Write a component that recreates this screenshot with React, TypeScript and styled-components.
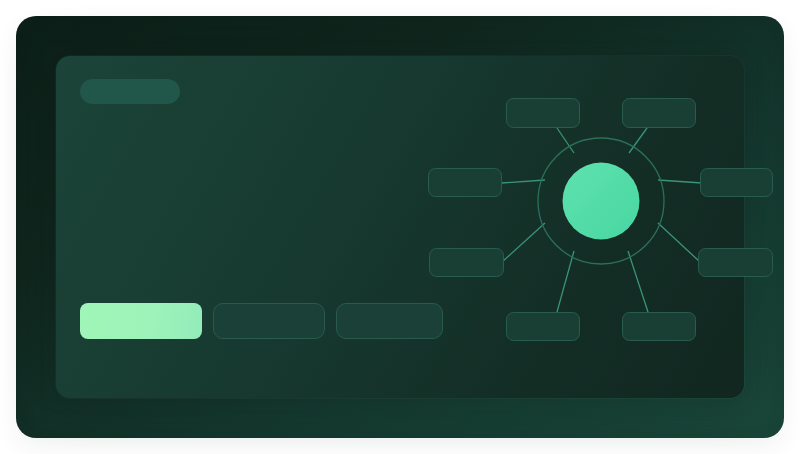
import { createGlobalStyle, styled } from 'styled-components';

const GlobalStyle = createGlobalStyle`
  html, body {
    margin: 0;
    padding: 0;
    background: #ffffff;
    font-family: Inter, "Liberation Sans", sans-serif;
  }
`;

interface DiagramNode {
  x: number;
  y: number;
  w: number;
  h: number;
}

const nodes: DiagramNode[] = [
  { x: 78, y: 0, w: 74, h: 30 },
  { x: 194, y: 0, w: 74, h: 30 },
  { x: 0, y: 70, w: 74, h: 29 },
  { x: 272, y: 70, w: 73, h: 29 },
  { x: 1, y: 150, w: 75, h: 29 },
  { x: 270, y: 150, w: 75, h: 29 },
  { x: 78, y: 214, w: 74, h: 29 },
  { x: 194, y: 214, w: 74, h: 29 },
];

const links: [number, number, number, number][] = [
  [129, 30, 146, 55],
  [219, 30, 201, 55],
  [74, 85, 117, 82],
  [230, 82, 274, 85],
  [74, 164, 117, 125],
  [230, 125, 272, 164],
  [146, 153, 129, 214],
  [200, 153, 220, 214],
];

function HubDiagram() {
  return (
    <DiagramSvg viewBox="0 0 346 244" width={346} height={244}>
      <defs>
        <linearGradient id="hub" x1="0" y1="0" x2="1" y2="1">
          <stop offset="0%" stopColor="#5fe2ae" />
          <stop offset="100%" stopColor="#48d6a2" />
        </linearGradient>
      </defs>
      {links.map(([x1, y1, x2, y2], i) => (
        <line key={i} x1={x1} y1={y1} x2={x2} y2={y2} stroke="#3a9477" strokeWidth={1.3} />
      ))}
      <circle cx={173} cy={103} r={63} fill="none" stroke="#2c6f5a" strokeWidth={1.3} />
      <circle cx={173} cy={103} r={38.5} fill="url(#hub)" />
      {nodes.map((n, i) => (
        <rect
          key={i}
          x={n.x + 0.5}
          y={n.y + 0.5}
          width={n.w - 1}
          height={n.h - 1}
          rx={7}
          fill="#193f35"
          stroke="#2a5c4d"
          strokeWidth={1}
        />
      ))}
    </DiagramSvg>
  );
}

function App() {
  return (
    <>
      <GlobalStyle />
      <Page>
        <OuterCard>
          <Panel>
            <TagPill />
            <ButtonRow>
              <PrimaryButton />
              <GhostButton $width={112} />
              <GhostButton $width={107} />
            </ButtonRow>
            <HubDiagram />
          </Panel>
        </OuterCard>
      </Page>
    </>
  );
}

const Page = styled.div`
  width: 800px;
  height: 454px;
  padding: 16px;
  box-sizing: border-box;
`;

const OuterCard = styled.div`
  width: 768px;
  height: 422px;
  box-sizing: border-box;
  padding: 40px;
  border-radius: 20px;
  background: linear-gradient(150deg, #0d211a 0%, #10281f 30%, #153a30 62%, #1b4a3c 100%);
  box-shadow:
    0 10px 24px rgba(20, 50, 40, 0.06),
    inset 0 0 30px rgba(0, 0, 0, 0.16);
  display: flex;
`;

const Panel = styled.div`
  position: relative;
  flex: 1;
  display: flex;
  flex-direction: column;
  justify-content: space-between;
  align-items: flex-start;
  padding: 23px 24px 59px;
  border-radius: 14px;
  background: linear-gradient(120deg, #1c4438 0%, #173a30 40%, #132d25 75%, #112720 100%);
  box-shadow:
    0 0 0 1px rgba(255, 255, 255, 0.03),
    0 0 40px 12px rgba(0, 0, 0, 0.16);
`;

const TagPill = styled.div`
  width: 100px;
  height: 25px;
  border-radius: 13px;
  background: #20574a;
`;

const ButtonRow = styled.div`
  display: flex;
  gap: 11px;
`;

const PrimaryButton = styled.div`
  width: 122px;
  height: 36px;
  border-radius: 8px;
  background: linear-gradient(100deg, #a0f5b8 0%, #9df3b9 60%, #93ebb9 100%);
`;

const GhostButton = styled.div<{ $width: number }>`
  width: ${({ $width }) => $width}px;
  height: 36px;
  box-sizing: border-box;
  border-radius: 10px;
  background: #1a4037;
  border: 1px solid #2a5a4b;
`;

const DiagramSvg = styled.svg`
  position: absolute;
  left: 372px;
  top: 42px;
  overflow: visible;
`;

export default App;
